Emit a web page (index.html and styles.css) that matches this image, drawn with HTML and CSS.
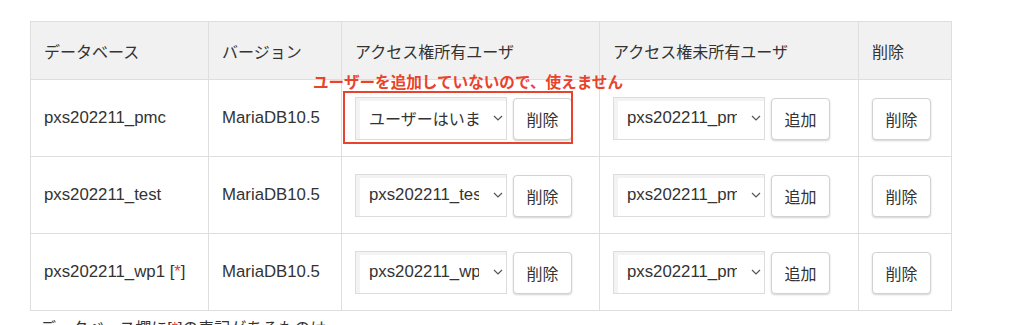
FILE: index.html
```html
<!DOCTYPE html>
<html lang="ja">
<head>
<meta charset="utf-8">
<link rel="stylesheet" href="styles.css">
</head>
<body>
<div class="page">
  <div class="wrap">
    <table class="db">
      <thead>
        <tr>
          <th class="c1">データベース</th>
          <th class="c2">バージョン</th>
          <th class="c3">アクセス権所有ユーザ</th>
          <th class="c4">アクセス権未所有ユーザ</th>
          <th class="c5">削除</th>
        </tr>
      </thead>
      <tbody>
        <tr>
          <td class="lat">pxs202211_pmc</td>
          <td class="lat">MariaDB10.5</td>
          <td><div class="ctl"><div class="sel"><span class="sel-txt">ユーザーはいません</span><svg class="chev" width="10" height="6" viewBox="0 0 10 6"><path d="M1 1l4 4 4-4" fill="none" stroke="#555" stroke-width="1.2"/></svg></div><button class="btn">削除</button></div></td>
          <td><div class="ctl"><div class="sel"><span class="sel-txt lat">pxs202211_pmc</span><svg class="chev" width="10" height="6" viewBox="0 0 10 6"><path d="M1 1l4 4 4-4" fill="none" stroke="#555" stroke-width="1.2"/></svg></div><button class="btn">追加</button></div></td>
          <td><button class="btn">削除</button></td>
        </tr>
        <tr>
          <td class="lat">pxs202211_test</td>
          <td class="lat">MariaDB10.5</td>
          <td><div class="ctl"><div class="sel"><span class="sel-txt lat">pxs202211_test</span><svg class="chev" width="10" height="6" viewBox="0 0 10 6"><path d="M1 1l4 4 4-4" fill="none" stroke="#555" stroke-width="1.2"/></svg></div><button class="btn">削除</button></div></td>
          <td><div class="ctl"><div class="sel"><span class="sel-txt lat">pxs202211_pmc</span><svg class="chev" width="10" height="6" viewBox="0 0 10 6"><path d="M1 1l4 4 4-4" fill="none" stroke="#555" stroke-width="1.2"/></svg></div><button class="btn">追加</button></div></td>
          <td><button class="btn">削除</button></td>
        </tr>
        <tr>
          <td class="lat">pxs202211_wp1 [<span class="ast">*</span>]</td>
          <td class="lat">MariaDB10.5</td>
          <td><div class="ctl"><div class="sel"><span class="sel-txt lat">pxs202211_wp1</span><svg class="chev" width="10" height="6" viewBox="0 0 10 6"><path d="M1 1l4 4 4-4" fill="none" stroke="#555" stroke-width="1.2"/></svg></div><button class="btn">削除</button></div></td>
          <td><div class="ctl"><div class="sel"><span class="sel-txt lat">pxs202211_pmc</span><svg class="chev" width="10" height="6" viewBox="0 0 10 6"><path d="M1 1l4 4 4-4" fill="none" stroke="#555" stroke-width="1.2"/></svg></div><button class="btn">追加</button></div></td>
          <td><button class="btn">削除</button></td>
        </tr>
      </tbody>
    </table>
    <div class="note-text">ユーザーを追加していないので、使えません</div>
    <div class="note-box"></div>
  </div>
  <p class="foot">データベース欄に[<span class="ast">*</span>]の表記があるものは、</p>
</div>
</body>
</html>
```

FILE: styles.css
```css
html, body {
  margin: 0;
  padding: 0;
  background: #fff;
}
body {
  font-family: "Liberation Sans", "Noto Sans CJK JP", sans-serif;
  color: #333;
  font-size: 16px;
}
.page {
  padding: 21px 0 0 30px;
}
.wrap {
  position: relative;
  width: 922px;
}
.db {
  border-collapse: collapse;
  table-layout: fixed;
  width: 922px;
}
.db th, .db td {
  border: 1px solid #dedede;
  text-align: left;
  vertical-align: middle;
  padding: 0 0 0 13px;
}
.db th {
  background: #f1f1f1;
  font-weight: normal;
  font-size: 16px;
  height: 57px;
}
.db td {
  height: 76px;
}
.c1 { width: 164px; }
.c2 { width: 119px; }
.c3 { width: 244px; }
.c4 { width: 245px; }
.c5 { width: 79px; }
.lat {
  font-size: 16.8px;
}
.ast {
  color: #e33;
}
.ctl {
  display: flex;
  align-items: center;
  gap: 6px;
}
.sel {
  box-sizing: border-box;
  width: 152px;
  height: 43px;
  border: 1px solid #dcdcdc;
  background: #fff;
  box-shadow: inset 4px 3px 0 #f3f3f3;
  display: flex;
  align-items: center;
  padding-left: 13px;
  font-size: 16px;
}
.sel-txt {
  width: 110px;
  overflow: hidden;
  white-space: nowrap;
}
.chev {
  margin-left: 14px;
}
.btn {
  box-sizing: border-box;
  width: 59px;
  height: 42px;
  border: 1px solid #d2d2d2;
  border-radius: 4px;
  background: #fff;
  box-shadow: 0 1px 2px rgba(0, 0, 0, 0.18);
  font-family: "Liberation Sans", "Noto Sans CJK JP", sans-serif;
  font-size: 16px;
  color: #333;
  padding: 0;
  margin-top: 2px;
}
.note-text {
  position: absolute;
  left: 283px;
  top: 50px;
  font-size: 15.6px;
  font-weight: bold;
  color: #e8432d;
  line-height: 20px;
  white-space: nowrap;
  font-family: "Noto Sans CJK JP", sans-serif;
}
.note-box {
  position: absolute;
  left: 313px;
  top: 70px;
  width: 230px;
  height: 53px;
  box-sizing: border-box;
  border: 2.5px solid #e8432d;
}
.foot {
  margin: 8px 0 0 10px;
  font-size: 16px;
  line-height: 20px;
}
```
